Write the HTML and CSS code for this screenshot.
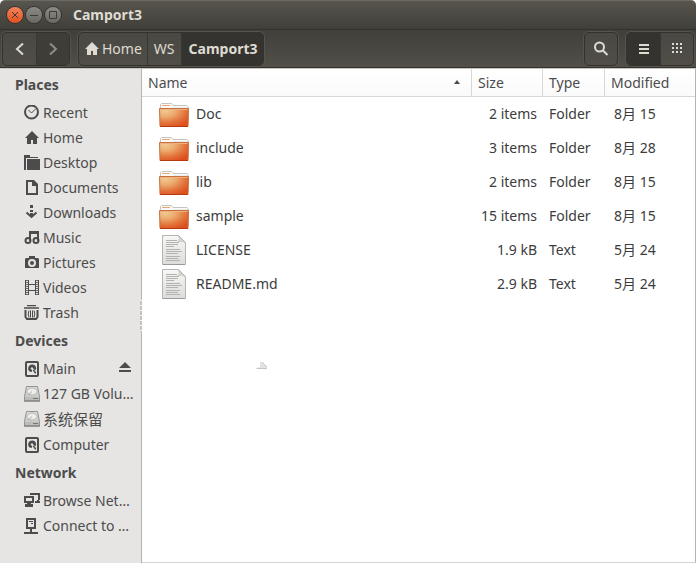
FILE: index.html
```
<!DOCTYPE html>
<html lang="en">
<head>
<meta charset="utf-8">
<title>Camport3</title>
<link rel="stylesheet" href="styles.css">
</head>
<body>
<svg class="defs" aria-hidden="true">
  <defs>
    <radialGradient id="orange" cx=".2" cy=".1" r="1">
      <stop offset="0" stop-color="#f0cb94"/><stop offset=".35" stop-color="#ebac70"/><stop offset=".7" stop-color="#e2743c"/><stop offset="1" stop-color="#dd4f1c"/>
    </radialGradient>
    <linearGradient id="paper" x1="0" y1="0" x2="0" y2="1">
      <stop offset="0" stop-color="#f7f7f6"/><stop offset="1" stop-color="#dcdcda"/>
    </linearGradient>
    <linearGradient id="metal" x1="0" y1="0" x2="0" y2="1">
      <stop offset="0" stop-color="#dededc"/><stop offset="1" stop-color="#c0c0be"/>
    </linearGradient>
    <symbol id="i-home" viewBox="0 0 16 16"><path d="M8 1 1 8h2v6h4v-4h2v4h4V8h2z"/></symbol>
    <symbol id="i-folder" viewBox="0 0 31 28">
      <path d="M1.500 24V4.500l1-1h10l1.500 2h14l1 1V24z" fill="#fafafa" stroke="#c4c4c1"/>
      <path d="M3 5.500h8" stroke="#efa468"/><path d="M14 7.500h14" stroke="#ececea"/>
      <path d="M.5 8.500h29l-.5 18h-28z" fill="url(#orange)" stroke="#c9703f"/>
      <path d="M1 26.500h28" stroke="#b93a10"/><path d="M1.500 9.500h27" stroke="#efb27c"/>
    </symbol>
    <symbol id="i-text" viewBox="0 0 25 31">
      <path d="M.5.500h16l7 7v22H.5z" fill="url(#paper)" stroke="#b5b5b2"/>
      <path d="M16 1c2 2 1 4 0 6 3-1 5-1 7 1z" fill="#d5d5d2" stroke="#c5c5c2" stroke-width=".7"/>
      <path d="M1 29.500h22" stroke="#999"/>
      <path d="M4 5.500h11M4 7.500h13M4 9.500h12M4 11.500h8M4 14.500h14M4 16.500h16M4 18.500h12M4 21.500h14M4 23.500h12M4 25.500h14" stroke="#b3b3b0"/>
    </symbol>
    <symbol id="i-disk" viewBox="0 0 16 16">
      <rect x="2" y="1" width="12" height="14" rx="1" fill="none" stroke="currentColor" stroke-width="2"/>
      <path d="M8 3.500a4 4 0 0 0-3 6.500c1 1 2 1 3 .7V9L6.500 7.500 8 6l3 3.500A3.500 3.500 0 0 0 8 3.500zM8.500 9l2.500 3.500h1V11L9.500 8.500z"/>
    </symbol>
    <symbol id="i-drive" viewBox="0 0 16 16">
      <path d="M2.500.5h11l2 10v4.500H.5v-4.500z" fill="url(#metal)" stroke="#92928f"/>
      <ellipse cx="8" cy="5.500" rx="5" ry="3.500" fill="#ededeb" stroke="#b8b8b5"/>
      <path d="M8 5.500 4 9" stroke="#b2b2af"/><path d="M1 11h14v3H1z" fill="#bcbcba"/><path d="M9 12.500h5M0 15h16" stroke="#777774"/>
    </symbol>
  </defs>
</svg>
<div class="window">
  <header class="titlebar">
    <button class="orb close" aria-label="Close"><svg viewBox="0 0 16 16"><path d="m5 5 6 6M11 5l-6 6"/></svg></button>
    <button class="orb" aria-label="Minimize"><svg viewBox="0 0 16 16"><path d="M4 8.500h8"/></svg></button>
    <button class="orb" aria-label="Maximize"><svg viewBox="0 0 16 16"><path d="M4.500 4.500h7v7h-7z"/></svg></button>
    <h1>Camport3</h1>
  </header>
  <nav class="toolbar" aria-label="Toolbar">
    <div class="group">
      <button class="tool" aria-label="Back"><svg viewBox="0 0 16 16"><path class="line" d="M11 2.500 5 8l6 5.500"/></svg></button>
      <button class="tool dim" aria-label="Forward" disabled><svg viewBox="0 0 16 16"><path class="line" d="m5 2.500 6 5.500-6 5.500"/></svg></button>
    </div>
    <div class="group path">
      <button class="crumb"><svg><use href="#i-home"/></svg>Home</button>
      <button class="crumb">WS</button>
      <button class="crumb active">Camport3</button>
    </div>
    <div class="group search">
      <button class="tool" aria-label="Search"><svg viewBox="0 0 16 16"><circle class="line" cx="6.500" cy="6" r="4.500"/><path class="line" d="m10 9.500 4.500 4.500"/></svg></button>
    </div>
    <div class="group views">
      <button class="tool active" aria-label="List view"><svg viewBox="0 0 16 16"><path d="M3 3h10v2H3zM3 7h10v2H3zM3 11h10v2H3z"/></svg></button>
      <button class="tool" aria-label="Icon view"><svg viewBox="0 0 16 16"><path d="M3 2h2v2H3zM7 2h2v2H7zM11 2h2v2h-2zM3 6h2v2H3zM7 6h2v2H7zM11 6h2v2h-2zM3 10h2v2H3zM7 10h2v2H7zM11 10h2v2h-2z"/></svg></button>
    </div>
  </nav>
  <div class="body">
    <aside class="sidebar">
      <h2>Places</h2>
      <ul>
        <li><a href="#recent"><svg viewBox="0 0 16 16"><circle cx="7.500" cy="7" r="6.500" fill="none" stroke="currentColor" stroke-width="2"/><path d="m4.500 5 3 3 4-4" fill="none" stroke="currentColor"/></svg><span>Recent</span></a></li>
        <li><a href="#home"><svg><use href="#i-home"/></svg><span>Home</span></a></li>
        <li><a href="#desktop"><svg viewBox="0 0 16 16"><path d="M0 0h6v2h8v1H2v12H0zM3 4h13v11H3z"/></svg><span>Desktop</span></a></li>
        <li><a href="#documents"><svg viewBox="0 0 16 16"><path fill-rule="evenodd" d="M2 0h8l4 4v11H2zM4 2v11h8V6H8V2z"/></svg><span>Documents</span></a></li>
        <li><a href="#downloads"><svg viewBox="0 0 16 16"><path d="M6 0h3v3H6zM6 5h3v2H6zM6 8h3v3H6z"/><path d="m2.500 7.500 5 4.500 5-4.500" fill="none" stroke="currentColor" stroke-width="2"/></svg><span>Downloads</span></a></li>
        <li><a href="#music"><svg viewBox="0 0 16 16"><path d="M5 1h10v10h-2V4H7v7H5z"/><circle cx="4" cy="10.500" r="2.500" fill="none" stroke="currentColor" stroke-width="2"/><circle cx="12" cy="10.500" r="2.500" fill="none" stroke="currentColor" stroke-width="2"/></svg><span>Music</span></a></li>
        <li><a href="#pictures"><svg viewBox="0 0 16 16"><path fill-rule="evenodd" d="M5 1h6v2h3l1 1v9H1V4l1-1h3zM8 4a4 4 0 1 0 0 8 4 4 0 0 0 0-8z"/><circle cx="8" cy="8" r="2"/></svg><span>Pictures</span></a></li>
        <li><a href="#videos"><svg viewBox="0 0 16 16"><path d="M1.500 0v15M4.500 0v15M11.500 0v15M14.500 0v15M4 4.500h8M4 10.500h8" stroke="currentColor" fill="none"/><path d="M1 .5h4M1 2.500h4M1 4.500h4M1 6.500h4M1 8.500h4M1 10.500h4M1 12.500h4M1 14.500h4M11 .5h4M11 2.500h4M11 4.500h4M11 6.500h4M11 8.500h4M11 10.500h4M11 12.500h4M11 14.500h4" stroke="currentColor" stroke-width=".8"/></svg><span>Videos</span></a></li>
        <li><a href="#trash"><svg viewBox="0 0 16 16"><path d="M3 .500h9M0 3h15" fill="none" stroke="currentColor" stroke-width="1.500"/><path d="M1.500 5v7l1.500 2h9l1.500-2V5" fill="none" stroke="currentColor" stroke-width="2"/><path d="M5 5.500q-1.500 3.500 0 7M6.500 5.500v7M8.500 5.500v7M10 5.500q1.500 3.500 0 7" fill="none" stroke="currentColor"/></svg><span>Trash</span></a></li>
      </ul>
      <h2>Devices</h2>
      <ul>
        <li><a href="#main"><svg><use href="#i-disk"/></svg><span>Main</span></a><button class="eject" aria-label="Eject Main"><svg viewBox="0 0 14 14"><path d="M7 0 1 6h12zM1 8h12v2H1z"/></svg></button></li>
        <li><a href="#volume"><svg><use href="#i-drive"/></svg><span>127 GB Volu…</span></a></li>
        <li class="tall"><a href="#reserved"><svg><use href="#i-drive"/></svg><span lang="zh">系统保留</span></a></li>
        <li><a href="#computer"><svg><use href="#i-disk"/></svg><span>Computer</span></a></li>
      </ul>
      <h2>Network</h2>
      <ul>
        <li><a href="#network"><svg viewBox="0 0 16 16"><path d="M1 4h8v5H1z" fill="none" stroke="currentColor" stroke-width="2"/><path d="M3 10h4v1h2v3H1v-3h2zM6 0h10v7h-1v1h1v2h-5V8h2V7h1V2H6z"/></svg><span>Browse Net…</span></a></li>
        <li><a href="#connect"><svg viewBox="0 0 16 16"><path d="M3 1h8v9H3z" fill="none" stroke="currentColor" stroke-width="2"/><path d="M5 3h4v1H5zM7 5h2v1H7zM6 11h2v3h6v2H0v-2h6z"/></svg><span>Connect to …</span></a></li>
      </ul>
      <i class="grip"></i>
    </aside>
    <main class="files">
      <table>
        <colgroup><col><col class="c-size"><col class="c-type"><col class="c-mod"></colgroup>
        <thead><tr><th><div class="sort">Name<svg viewBox="0 0 8 6"><path d="M4 0 7 4H1z"/></svg></div></th><th>Size</th><th>Type</th><th>Modified</th></tr></thead>
        <tbody>
          <tr><td><div class="file"><svg class="folder"><use href="#i-folder"/></svg>Doc</div></td><td>2 items</td><td>Folder</td><td>8月 15</td></tr>
          <tr><td><div class="file"><svg class="folder"><use href="#i-folder"/></svg>include</div></td><td>3 items</td><td>Folder</td><td>8月 28</td></tr>
          <tr><td><div class="file"><svg class="folder"><use href="#i-folder"/></svg>lib</div></td><td>2 items</td><td>Folder</td><td>8月 15</td></tr>
          <tr><td><div class="file"><svg class="folder"><use href="#i-folder"/></svg>sample</div></td><td>15 items</td><td>Folder</td><td>8月 15</td></tr>
          <tr><td><div class="file"><svg class="doc"><use href="#i-text"/></svg>LICENSE</div></td><td>1.9 kB</td><td>Text</td><td>5月 24</td></tr>
          <tr><td><div class="file"><svg class="doc"><use href="#i-text"/></svg>README.md</div></td><td>2.9 kB</td><td>Text</td><td>5月 24</td></tr>
        </tbody>
      </table>
      <svg class="fragment" viewBox="0 0 12 9"><path d="M4 1h2l5 5v2H0V7l4-1z" fill="#e2e2e0"/><path d="m6 1 5 5M1 7.500h10" stroke="#c5c5c2"/></svg>
    </main>
  </div>
</div>
</body>
</html>
```
FILE: styles.css
```
* { box-sizing: border-box; }
body { margin: 0; background: #fff; color: #4c4c4c; font: 14px/20px "Noto Sans", "Noto Sans CJK SC", sans-serif; }
button { margin: 0; padding: 0; border: 0; background: none; color: inherit; font: inherit; }
svg { display: block; flex: none; fill: currentColor; }
.defs { position: absolute; width: 0; height: 0; }
.window { min-height: 100vh; display: flex; flex-direction: column; }

.titlebar { display: flex; align-items: center; gap: 3px; height: 29px; padding: 0 7px; border-top: 1px solid #6b6a63; border-radius: 5px 5px 0 0; background: linear-gradient(#57554d, #403f3a); color: #dfdbd2; }
.titlebar h1 { margin: 0 0 0 9px; font-size: 14px; line-height: 20px; }
.orb { width: 16px; height: 16px; border-radius: 50%; background: linear-gradient(#8b8a83, #6a6963); box-shadow: 0 0 0 1px #34332f; color: #3c3b37; }
.orb.close { background: linear-gradient(#f5845b, #e2501f); }
.orb svg { width: 16px; height: 16px; fill: none; stroke: currentColor; }

.toolbar { display: flex; align-items: center; height: 39px; padding: 0 2px; border-top: 1px solid #33322e; border-bottom: 1px solid #33322e; background: linear-gradient(#403f3a, #514f48); color: #dfdbd2; }
.group { display: flex; height: 34px; overflow: hidden; border: 1px solid #33322e; border-radius: 5px; background: linear-gradient(#4a4843, #504e47); box-shadow: 0 0 0 1px #55534c; }
.path { margin-left: 8px; }
.search { margin-left: auto; }
.views { margin-left: 8px; }
.tool { display: grid; place-items: center; width: 33px; }
.search .tool { width: 32px; }
.tool + .tool, .crumb + .crumb { border-left: 1px solid #383732; }
.tool svg { width: 16px; height: 16px; }
.tool.dim { background: #3e3d38; color: #918e87; }
.line { fill: none; stroke: currentColor; stroke-width: 2; }
.crumb { display: flex; align-items: center; gap: 2px; padding: 0 5px; }
.crumb svg { width: 16px; height: 16px; }
.crumb:nth-child(2) { padding: 0 6px; }
.active { background: #34332f; }
.crumb.active { padding: 0 5px 0 7px; font-weight: bold; }

.body { flex: 1; display: flex; border-top: 1px solid #c8c4c0; }
.sidebar { position: relative; width: 142px; border-right: 1px solid #b5b3b0; background: #e6e5e3; }
.sidebar h2 { margin: 0; padding: 6px 15px 5px; font-size: 14px; line-height: 20px; }
.sidebar ul { margin: 0; padding: 0 4px 0 24px; list-style: none; }
.sidebar li { display: flex; align-items: center; height: 25px; }
.sidebar li.tall { height: 26px; }
.sidebar a { flex: 1; display: flex; align-items: center; gap: 3px; min-width: 0; color: inherit; text-decoration: none; }
.sidebar a svg { width: 16px; height: 16px; }
.sidebar span { white-space: nowrap; }
[lang="zh"] { font-size: 15px; }
.eject { padding-right: 5px; }
.eject svg { width: 14px; height: 14px; }
.grip { position: absolute; right: -1px; top: 231px; width: 2px; height: 32px; background: repeating-linear-gradient(#f6f6f5 0 1px, #c4c2bf 1px 5px); }

.files { position: relative; flex: 1; border-right: 1px solid #b5b3b0; border-bottom: 1px solid #d5d3d0; background: #fff; }
table { width: 100%; border-collapse: separate; border-spacing: 0; table-layout: fixed; }
.c-size { width: 71px; }
.c-type { width: 62px; }
.c-mod { width: 90px; }
th { height: 28px; padding: 0 6px; border-right: 1px solid #d9d6d3; border-bottom: 1px solid #d9d6d3; background: linear-gradient(#fff, #fafafa); text-align: left; font-weight: normal; }
th:last-child { border-right: 0; }
.sort { display: flex; align-items: center; justify-content: space-between; padding-right: 4px; }
.sort svg { width: 8px; height: 6px; }
td { height: 34px; padding: 0 6px; color: #3c3c3c; white-space: nowrap; }
td:nth-child(2) { padding-right: 6px; text-align: right; }
td:nth-child(4) { padding: 0 9px; }
.file { display: flex; align-items: center; gap: 6px; padding-left: 11px; }
.folder { width: 31px; height: 28px; }
.doc { width: 25px; height: 31px; margin: 0 3px; }
.fragment { position: absolute; left: 114px; top: 292px; width: 12px; height: 9px; }
```
